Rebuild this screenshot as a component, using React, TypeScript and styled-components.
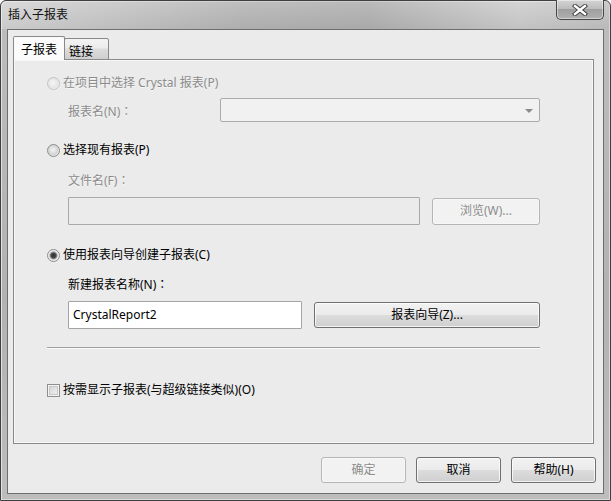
import React from "react";
import styled, { createGlobalStyle } from "styled-components";

const GlobalStyle = createGlobalStyle`
  html, body { margin: 0; padding: 0; background: #ffffff; }
  body { font-family: "Noto Sans", "Noto Sans CJK SC", sans-serif; font-size: 12px; }
  * { box-sizing: border-box; }
`;

const Window = styled.div`
  width: 611px;
  height: 501px;
  display: flex;
  flex-direction: column;
  border: 1px solid #3f3f3f;
  border-radius: 6px 6px 0 0;
  background: linear-gradient(to bottom, #cfcfcf 0px, #bcbcbc 28px, #b2b2b2 60%, #bdbdbd 100%);
  padding: 0 6px 6px 6px;
  box-shadow: inset 1px 1px 0 #e2e2e2, inset -1px -1px 0 #dadada;
`;

const TitleBar = styled.div`
  height: 28px;
  display: flex;
  align-items: flex-start;
  justify-content: space-between;
  background: linear-gradient(to right, rgba(255,255,255,0.22), rgba(0,0,0,0.08) 40%, rgba(0,0,0,0.1) 60%, rgba(255,255,255,0.1) 85%, rgba(0,0,0,0.02));
  margin: 0 -6px;
  padding: 0 6px 0 7px;
  border-radius: 6px 6px 0 0;
`;

const Title = styled.span`
  font-family: "Noto Sans CJK SC", sans-serif;
  font-size: 12px;
  color: #111;
  line-height: 16px;
  margin-top: 5px;
`;

const CloseBtn = styled.div`
  width: 48px;
  height: 20px;
  margin-top: -1px;
  border: 1px solid #474747;
  border-top: none;
  border-radius: 0 0 5px 5px;
  background: linear-gradient(to bottom, #d4d4d4 0%, #bdbdbd 45%, #9f9f9f 50%, #b0b0b0 100%);
  box-shadow: inset 0 0 0 1px rgba(255,255,255,0.45);
  display: flex;
  align-items: center;
  justify-content: center;
`;

const Client = styled.div`
  flex: 1;
  display: flex;
  flex-direction: column;
  background: #ebebeb;
  border: 1px solid #6e6e6e;
  padding: 6px 7px 10px 5px;
`;

const TabStrip = styled.div`
  display: flex;
  align-items: flex-end;
  height: 24px;
  position: relative;
  z-index: 1;
  margin-bottom: -1px;
`;

const Tab = styled.div<{ $active?: boolean }>`
  width: ${(p) => (p.$active ? "52px" : "45px")};
  height: ${(p) => (p.$active ? "24px" : "22px")};
  padding: ${(p) => (p.$active ? "0 0 0 7px" : "3px 0 0 4px")};
  margin-left: ${(p) => (p.$active ? "0" : "-1px")};
  border: 1px solid #898989;
  border-bottom: ${(p) => (p.$active ? "none" : "1px solid #898989")};
  border-radius: 2px 2px 0 0;
  background: ${(p) =>
    p.$active ? "#fbfbfb" : "linear-gradient(to bottom, #f3f3f3 0%, #ebebeb 45%, #dcdcdc 50%, #cfcfcf 100%)"};
  font-family: "Noto Sans CJK SC", sans-serif;
  font-size: 12px;
  color: #000;
  white-space: nowrap;
  display: flex;
  align-items: center;
  position: relative;
  z-index: ${(p) => (p.$active ? 2 : 1)};
`;

const Panel = styled.div`
  flex: 1;
  border: 1px solid #898989;
  background: #ebebeb;
  margin-right: 2px;
  padding: 13px 53px 0 33px;
  display: flex;
  flex-direction: column;
  box-shadow: inset 1px 1px 0 #f7f7f7, inset -1px -1px 0 #f7f7f7;
`;

const OptionRow = styled.label<{ $gap: number }>`
  display: flex;
  align-items: center;
  height: 20px;
  gap: 3px;
  margin-top: ${(p) => p.$gap}px;
`;

const Text = styled.span<{ $disabled?: boolean }>`
  font-family: "Noto Sans", "Noto Sans CJK SC", sans-serif;
  font-size: 12px;
  line-height: 16px;
  white-space: nowrap;
  color: ${(p) => (p.$disabled ? "#8b8b8b" : "#000")};
  text-shadow: ${(p) => (p.$disabled ? "0 1px 0 rgba(255,255,255,0.6)" : "none")};
`;

const Colon = styled.span`
  font-family: "Noto Sans CJK TC", sans-serif;
`;

const Radio = styled.span<{ $checked?: boolean; $disabled?: boolean }>`
  width: 13px;
  height: 13px;
  border-radius: 50%;
  flex: none;
  border: 1px solid ${(p) => (p.$disabled ? "#c2c2c2" : "#8c8c8c")};
  background: ${(p) =>
    p.$checked
      ? "radial-gradient(circle at 50% 50%, #2e2e2e 0, #4a4a4a 2.5px, #9a9a9a 3.5px, #e9e9e9 4.5px, #f5f5f5 6px)"
      : p.$disabled
      ? "radial-gradient(circle at 45% 45%, #f6f6f6 0, #e4e4e4 5px, #f2f2f2 6px)"
      : "radial-gradient(circle at 45% 45%, #f3f3f3 0, #d2d2d2 5px, #ededed 6px)"};
`;

const Checkbox = styled.span`
  width: 13px;
  height: 13px;
  flex: none;
  border: 1px solid #8e8e8e;
  background: linear-gradient(135deg, #cfcfcf 0%, #eeeeee 80%);
  box-shadow: inset 0 0 0 1px #f4f4f4, inset 0 0 0 2px #c8c8c8;
`;

const FieldLabel = styled.div<{ $gap: number }>`
  display: flex;
  align-items: center;
  height: 20px;
  padding-left: 21px;
  margin-top: ${(p) => p.$gap}px;
`;

const ComboRow = styled.div`
  display: flex;
  align-items: center;
  padding-left: 21px;
  margin-top: 5px;
  height: 24px;
`;

const ComboLabel = styled.div`
  width: 152px;
  flex: none;
  padding-top: 3px;
`;

const Combo = styled.div`
  flex: 1;
  height: 24px;
  border: 1px solid #ababab;
  border-radius: 2px;
  background: #f1f1f1;
  display: flex;
  align-items: center;
  justify-content: flex-end;
  padding-right: 6px;
`;

const Arrow = styled.span`
  width: 0;
  height: 0;
  border-left: 4px solid transparent;
  border-right: 4px solid transparent;
  border-top: 4px solid #8a8a8a;
  margin-top: 1px;
`;

const InputRow = styled.div<{ $gap: number }>`
  display: flex;
  align-items: center;
  padding-left: 21px;
  height: 28px;
  margin-top: ${(p) => p.$gap}px;
`;

const TextBox = styled.div<{ $width: number; $disabled?: boolean }>`
  width: ${(p) => p.$width}px;
  height: 28px;
  flex: none;
  border: 1px solid ${(p) => (p.$disabled ? "#a9a9a9" : "#a4a4a4")};
  border-radius: 1px;
  background: ${(p) => (p.$disabled ? "#ebebeb" : "#ffffff")};
  display: flex;
  align-items: center;
  padding-left: 4px;
`;

const Button = styled.div<{ $width?: number; $height?: number; $disabled?: boolean; $ml?: number }>`
  width: ${(p) => (p.$width ? `${p.$width}px` : "auto")};
  flex: ${(p) => (p.$width ? "none" : "1")};
  height: ${(p) => p.$height ?? 26}px;
  margin-left: ${(p) => p.$ml ?? 0}px;
  border: 1px solid ${(p) => (p.$disabled ? "#b5b5b5" : "#707070")};
  border-radius: 3px;
  background: ${(p) =>
    p.$disabled
      ? "#f2f2f2"
      : "linear-gradient(to bottom, #f2f2f2 0%, #ebebeb 48%, #dcdcdc 52%, #cfcfcf 100%)"};
  box-shadow: inset 0 0 0 1px ${(p) => (p.$disabled ? "#f7f7f7" : "rgba(255,255,255,0.75)")};
  display: flex;
  align-items: center;
  justify-content: center;
`;

const Separator = styled.div`
  height: 1px;
  background: #a0a0a0;
  margin-top: 18px;
  box-shadow: 0 1px 0 #fafafa;
`;

const Footer = styled.div`
  display: flex;
  justify-content: flex-end;
  margin-top: 13px;
  gap: 10px;
`;

const Spacer = styled.div`
  flex: 1;
`;

export default function App() {
  return (
    <>
      <GlobalStyle />
      <Window>
        <TitleBar>
          <Title>插入子报表</Title>
          <CloseBtn>
            <svg width="16" height="12" viewBox="0 0 16 12">
              <path
                d="M3 2 L13 10 M13 2 L3 10"
                stroke="#3a3a3a"
                strokeWidth="4.2"
                strokeLinecap="square"
              />
              <path
                d="M3 2 L13 10 M13 2 L3 10"
                stroke="#ffffff"
                strokeWidth="2.4"
                strokeLinecap="square"
              />
            </svg>
          </CloseBtn>
        </TitleBar>
        <Client>
          <TabStrip>
            <Tab $active>子报表</Tab>
            <Tab>链接</Tab>
          </TabStrip>
          <Panel>
            <OptionRow $gap={0}>
              <Radio $disabled />
              <Text $disabled>在项目中选择 Crystal 报表(P)</Text>
            </OptionRow>
            <ComboRow>
              <ComboLabel>
                <Text $disabled>
                  报表名(N)<Colon>：</Colon>
                </Text>
              </ComboLabel>
              <Combo>
                <Arrow />
              </Combo>
            </ComboRow>
            <OptionRow $gap={18}>
              <Radio />
              <Text>选择现有报表(P)</Text>
            </OptionRow>
            <FieldLabel $gap={10}>
              <Text $disabled>
                文件名(F)<Colon>：</Colon>
              </Text>
            </FieldLabel>
            <InputRow $gap={7}>
              <TextBox $width={352} $disabled />
              <Button $width={108} $height={27} $ml={12} $disabled>
                <Text $disabled>浏览(W)...</Text>
              </Button>
            </InputRow>
            <OptionRow $gap={20}>
              <Radio $checked />
              <Text>使用报表向导创建子报表(C)</Text>
            </OptionRow>
            <FieldLabel $gap={9}>
              <Text>
                新建报表名称(N)<Colon>：</Colon>
              </Text>
            </FieldLabel>
            <InputRow $gap={7}>
              <TextBox $width={234}>
                <Text>CrystalReport2</Text>
              </TextBox>
              <Button $height={26} $ml={12}>
                <Text>报表向导(Z)...</Text>
              </Button>
            </InputRow>
            <Separator />
            <OptionRow $gap={32}>
              <Checkbox />
              <Text>按需显示子报表(与超级链接类似)(O)</Text>
            </OptionRow>
            <Spacer />
          </Panel>
          <Footer>
            <Button $width={85} $disabled>
              <Text $disabled>确定</Text>
            </Button>
            <Button $width={85}>
              <Text>取消</Text>
            </Button>
            <Button $width={85}>
              <Text>帮助(H)</Text>
            </Button>
          </Footer>
        </Client>
      </Window>
    </>
  );
}
